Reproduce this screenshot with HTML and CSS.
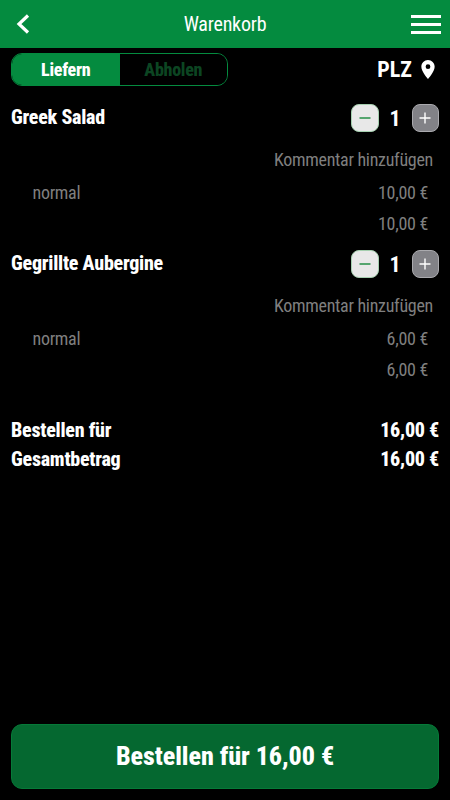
FILE: index.html
```html
<!DOCTYPE html>
<html lang="de">
<head>
  <meta charset="UTF-8" />
  <meta name="viewport" content="width=device-width, initial-scale=1.0"/>
  <title>Warenkorb</title>
  <link rel="stylesheet" href="styles.css">
</head>
<body>
  <header class="header">
    <svg class="back" viewBox="0 0 14 20"><path d="M12 1.5 L3 10 L12 18.5"/></svg>
    <h1>Warenkorb</h1>
    <div class="menu"><i></i><i></i><i></i></div>
  </header>

  <main>
    <div class="options">
      <div class="toggle">
        <button class="selected">Liefern</button>
        <button>Abholen</button>
      </div>
      <div class="plz">
        <span>PLZ</span>
        <svg viewBox="5 2 14 20"><path d="M12 2C8.13 2 5 5.13 5 9c0 5.25 7 13 7 13s7-7.75 7-13c0-3.87-3.13-7-7-7zm0 9.500a2.500 2.500 0 1 1 0-5 2.500 2.500 0 0 1 0 5z"/></svg>
      </div>
    </div>

    <section class="item">
      <div class="item-head">
        <h2>Greek Salad</h2>
        <div class="stepper">
          <button class="minus"><svg viewBox="0 0 12 12"><path d="M0.500 6H11.500"/></svg></button>
          <span>1</span>
          <button class="plus"><svg viewBox="0 0 12 12"><path d="M0.500 6H11.500M6 0.500V11.500"/></svg></button>
        </div>
      </div>
      <div class="comment"><span>Kommentar hinzufügen</span></div>
      <div class="line"><span>normal</span><span>10,00 €</span></div>
      <div class="line sum"><span>10,00 €</span></div>
    </section>

    <section class="item">
      <div class="item-head">
        <h2>Gegrillte Aubergine</h2>
        <div class="stepper">
          <button class="minus"><svg viewBox="0 0 12 12"><path d="M0.500 6H11.500"/></svg></button>
          <span>1</span>
          <button class="plus"><svg viewBox="0 0 12 12"><path d="M0.500 6H11.500M6 0.500V11.500"/></svg></button>
        </div>
      </div>
      <div class="comment"><span>Kommentar hinzufügen</span></div>
      <div class="line"><span>normal</span><span>6,00 €</span></div>
      <div class="line sum"><span>6,00 €</span></div>
    </section>

    <div class="totals">
      <div><span>Bestellen für</span><span>16,00 €</span></div>
      <div><span>Gesamtbetrag</span><span>16,00 €</span></div>
    </div>
  </main>

  <button class="order">Bestellen für 16,00 €</button>
</body>
</html>
```
FILE: styles.css
```css
* {
  box-sizing: border-box;
}
body {
  margin: 0;
  height: 800px;
  display: flex;
  flex-direction: column;
  background: #000;
  color: #fff;
  font-family: "Roboto Condensed", Roboto, sans-serif;
  font-stretch: 75%;
}
button {
  font: inherit;
  color: inherit;
  border: none;
  padding: 0;
  cursor: pointer;
}
h1, h2 {
  margin: 0;
}
.header {
  height: 48px;
  display: grid;
  grid-template-columns: 1fr auto 1fr;
  align-items: center;
  padding: 0 9px 0 16px;
  background: #048b3f;
}
.back {
  width: 14px;
  height: 20px;
  fill: none;
  stroke: #fff;
  stroke-width: 3.2;
}
.header h1 {
  font-size: 20px;
  font-weight: 430;
  letter-spacing: -0.2px;
  margin-right: 7px;
}
.menu {
  width: 30px;
  justify-self: end;
  display: grid;
  gap: 5px;
}
.menu i {
  height: 3px;
  background: #fff;
}
main {
  flex: 1;
  padding: 5px 11px 0;
}
.options {
  display: flex;
  justify-content: space-between;
  height: 33px;
  margin-bottom: 18px;
}
.toggle {
  display: flex;
  width: 217px;
  border: 1px solid #048b3f;
  border-radius: 11px;
  overflow: hidden;
}
.toggle button {
  flex: 1;
  background: #000;
  color: #0c4522;
  font-size: 18px;
  font-weight: 800;
  letter-spacing: -0.27px;
}
.toggle .selected {
  background: #048b3f;
  color: #fff;
}
.plz {
  display: flex;
  align-items: center;
  gap: 9px;
  font-size: 22px;
  font-weight: 700;
  padding-right: 4px;
}
.plz svg {
  width: 14px;
  height: 19px;
  fill: #fff;
}
.item {
  height: 146px;
}
.item-head {
  display: flex;
  justify-content: space-between;
  height: 41px;
}
.item h2 {
  font-size: 20px;
  font-weight: 800;
  letter-spacing: -0.25px;
  line-height: 26px;
}
.stepper {
  display: flex;
  height: 28px;
  align-items: center;
  font-size: 22px;
  font-weight: 700;
}
.stepper span {
  width: 33px;
  text-align: center;
}
.stepper button {
  width: 27.5px;
  height: 27.5px;
  display: grid;
  place-items: center;
  border-radius: 8px;
}
.stepper svg {
  width: 12px;
  height: 12px;
  fill: none;
  stroke-width: 1.4;
}
.minus {
  background: #e8e8e8;
  border: 1px solid #a5cfaf;
  stroke: #16883a;
}
.plus {
  background: #828287;
  border: 1px solid #aaaaae;
  stroke: #fff;
}
.comment {
  height: 32px;
  line-height: 30px;
  text-align: right;
  padding-right: 6px;
}
.comment, .line {
  font-size: 18px;
  font-weight: 430;
  letter-spacing: -0.3px;
  color: #7f7f7f;
}
.line {
  display: flex;
  justify-content: space-between;
  height: 31px;
  line-height: 32px;
  padding: 0 11px 0 21.5px;
}
.sum {
  justify-content: flex-end;
}
.totals {
  margin-top: 20px;
  font-size: 20px;
  font-weight: 800;
  letter-spacing: -0.25px;
}
.totals div {
  display: flex;
  justify-content: space-between;
  height: 29px;
  line-height: 29px;
}
.order {
  height: 65px;
  margin: 0 11px 11px;
  padding-bottom: 2px;
  border: 1px solid #067a38;
  border-radius: 11px;
  background: #056830;
  font-size: 26px;
  font-weight: 800;
  letter-spacing: -0.05px;
}
```
